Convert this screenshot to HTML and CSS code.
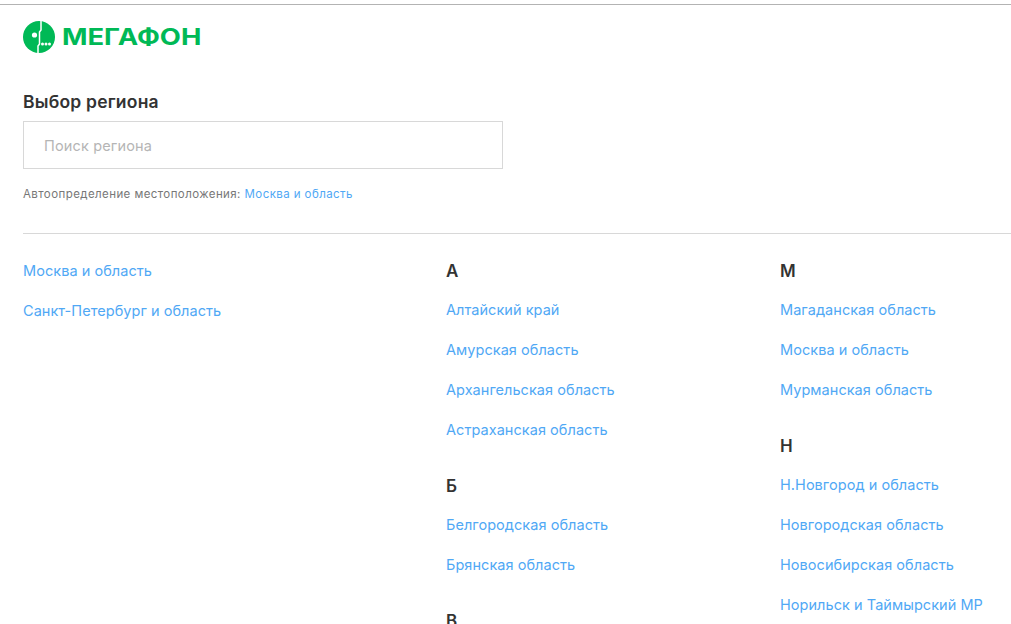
FILE: index.html
```html
<!DOCTYPE html>
<html lang="ru">
<head>
<meta charset="utf-8">
<title>Выбор региона</title>
<link rel="stylesheet" href="styles.css">
</head>
<body>
<div class="page">
  <header class="logo">
    <svg class="logo-mark" width="32" height="32" viewBox="0 0 32 32">
      <circle cx="16" cy="16" r="16" fill="#00b956"/>
      <path d="M18 0V9L16.5 11V23L15 25V32" fill="none" stroke="#fff" stroke-width="1.5"/>
      <circle cx="11.5" cy="14" r="2.6" fill="#fff"/>
      <circle cx="19.5" cy="23" r="1.5" fill="#fff"/>
      <circle cx="23" cy="23" r="1.5" fill="#fff"/>
      <circle cx="26.5" cy="23" r="1.5" fill="#fff"/>
    </svg>
    <span class="logo-text">МЕГАФОН</span>
  </header>
  <section class="search">
    <h1 class="search-title">Выбор региона</h1>
    <input class="search-input" type="text" placeholder="Поиск региона">
    <p class="auto">Автоопределение местоположения: <a href="#">Москва и область</a></p>
  </section>
  <hr class="divider">
  <main class="regions">
    <div class="col col-main">
      <a class="region" href="#">Москва и область</a>
      <a class="region" href="#">Санкт-Петербург и область</a>
    </div>
    <div class="col col-a">
      <div class="group">
        <h2 class="letter">А</h2>
        <a class="region" href="#">Алтайский край</a>
        <a class="region" href="#">Амурская область</a>
        <a class="region" href="#">Архангельская область</a>
        <a class="region" href="#">Астраханская область</a>
      </div>
      <div class="group">
        <h2 class="letter">Б</h2>
        <a class="region" href="#">Белгородская область</a>
        <a class="region" href="#">Брянская область</a>
      </div>
      <div class="group">
        <h2 class="letter">В</h2>
      </div>
    </div>
    <div class="col col-m">
      <div class="group">
        <h2 class="letter">М</h2>
        <a class="region" href="#">Магаданская область</a>
        <a class="region" href="#">Москва и область</a>
        <a class="region" href="#">Мурманская область</a>
      </div>
      <div class="group">
        <h2 class="letter">Н</h2>
        <a class="region" href="#">Н.Новгород и область</a>
        <a class="region" href="#">Новгородская область</a>
        <a class="region" href="#">Новосибирская область</a>
        <a class="region" href="#">Норильск и Таймырский МР</a>
      </div>
    </div>
  </main>
</div>
</body>
</html>
```
FILE: styles.css
```css
* { box-sizing: border-box; }
html, body { margin: 0; height: 100%; overflow: hidden; background: #fff; }
body { font-family: Inter, "Liberation Sans", sans-serif; color: #333; }
.page { height: 624px; overflow: hidden; padding-top: 4px; }
.page::before { content: ""; display: block; height: 1px; background: #b3b3b3; }
.logo { display: flex; align-items: center; gap: 7px; padding: 16px 0 0 23px; height: 48px; }
.logo-mark { flex: none; }
.logo-text { display: inline-block; transform: scaleX(1.19); transform-origin: left center; font-family: Inter, sans-serif; font-weight: 700; font-size: 23px; line-height: 32px; color: #00b956; }
.search { padding: 39px 0 0 23px; }
.search-title { margin: 0; font-size: 17.5px; font-weight: 600; line-height: 20px; letter-spacing: .2px; color: #333; }
.search-input { display: block; width: 480px; height: 48px; margin-top: 9px; padding: 0 20px; border: 1px solid #d8d8d8; border-radius: 0; outline: 0; font: 400 14.5px Inter, sans-serif; letter-spacing: .15px; color: #333; background: #fff; }
.search-input::placeholder { color: #b5b5b5; opacity: 1; }
.auto { margin: 17px 0 0; font-size: 11.5px; line-height: 16px; letter-spacing: .42px; color: #777; }
a { color: #50a8f5; text-decoration: none; }
.divider { height: 1px; margin: 31px 0 0 23px; border: 0; background: #d8d8d8; }
.regions { display: grid; grid-template-columns: 423px 334px 1fr; padding: 17px 0 0 23px; }
.region { display: block; font-size: 14.5px; line-height: 40px; letter-spacing: .05px; white-space: nowrap; }
.letter { margin: 0 0 -1px; font-size: 17px; font-weight: 600; line-height: 40px; color: #333; }
.group + .group { margin-top: 16px; }
```
